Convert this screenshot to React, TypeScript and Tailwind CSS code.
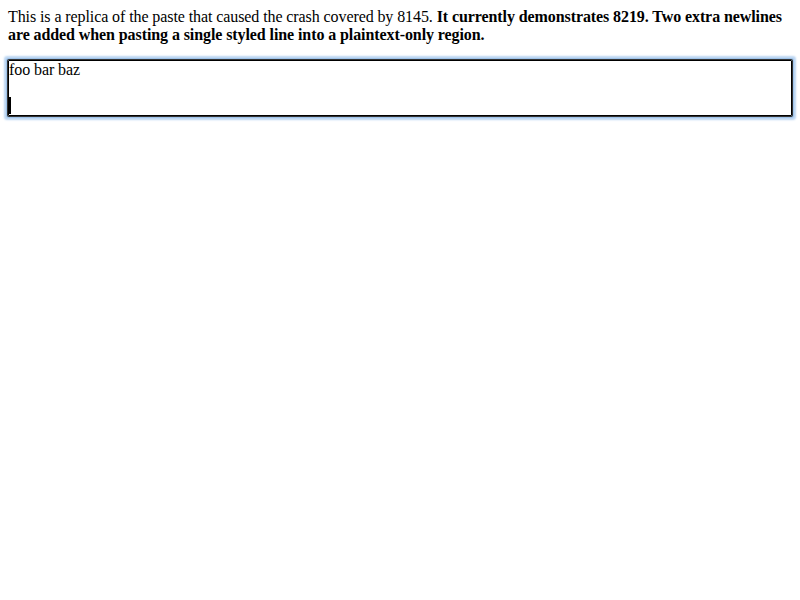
export default function App() {
  return (
    <div className="bg-white min-h-[600px] p-2 font-['Liberation_Serif',serif] text-base text-black leading-[18px] tracking-[-0.09px]">
      <div>
        This is a replica of the paste that caused the crash covered by 8145.{' '}
        <b>It currently demonstrates 8219. Two extra newlines are added when pasting a single styled line into a plaintext-only region.</b>
      </div>
      <div className="mt-4 border border-black rounded-[1px] shadow-[0_0_0_1px_#333,0_0_0_2px_#9fc3ea,0_0_2px_4px_#bcd6f2]">
        <div>foo bar baz</div>
        <div>&nbsp;</div>
        <div className="h-[18px] flex items-start">
          <span className="w-[2px] h-[17px] bg-black" />
        </div>
      </div>
    </div>
  );
}
